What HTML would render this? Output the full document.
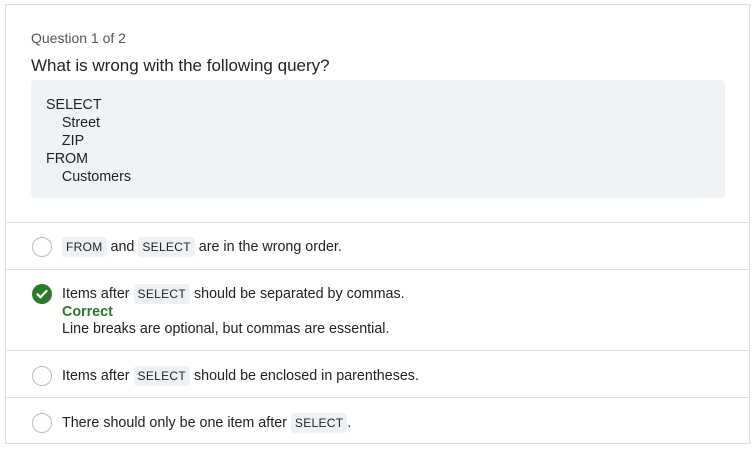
<!DOCTYPE html><html><head><style>
body{margin:0;background:#fff;font-family:"Liberation Sans",sans-serif;color:#222;}
.card{position:absolute;left:5px;top:4px;width:743px;height:438px;border:1px solid #ddd;}
.abs{position:absolute;white-space:nowrap}
.code{position:absolute;left:25px;top:75px;width:694px;height:118px;background:#f0f3f6;border-radius:4px}
.line{position:absolute;left:0;width:743px;border-top:1px solid #ddd}
.circ{position:absolute;left:26px;width:18px;height:18px;border:1px solid #bbb;border-radius:50%;background:#fff}
.k{font-family:"Liberation Sans",sans-serif;font-size:12px;background:#eef1f4;padding:3px 4px;border-radius:3px;letter-spacing:.3px}
.t{font-size:14.3px;left:56px}
</style></head><body><div class="card">
<div class="abs" style="left:25px;top:25px;font-size:14px;color:#555">Question 1 of 2</div>
<div class="abs" style="left:25px;top:51px;font-size:17px;color:#222">What is wrong with the following query?</div>
<div class="code"><div class="abs" style="left:15px;top:16px;font-size:14.3px;line-height:18px;color:#222">SELECT<br>&nbsp;&nbsp;&nbsp;&nbsp;Street<br>&nbsp;&nbsp;&nbsp;&nbsp;ZIP<br>FROM<br>&nbsp;&nbsp;&nbsp;&nbsp;Customers</div></div>
<div class="line" style="top:217px"></div>
<div class="circ" style="top:232px"></div>
<div class="abs t" style="top:234px"><span class="k">FROM</span> and <span class="k">SELECT</span> are in the wrong order.</div>
<div class="line" style="top:264px"></div>
<svg class="abs" style="left:26px;top:279px" width="20" height="20"><circle cx="10" cy="10" r="10" fill="#2a7a2a"/><path d="M5.5 10.3l3 3 6-6.3" stroke="#fff" stroke-width="2.2" fill="none" stroke-linecap="round" stroke-linejoin="round"/></svg>
<div class="abs t" style="top:281px;line-height:17.5px">Items after <span class="k">SELECT</span> should be separated by commas.<br><b style="color:#2a7a2a">Correct</b><br>Line breaks are optional, but commas are essential.</div>
<div class="line" style="top:345px"></div>
<div class="circ" style="top:361px"></div>
<div class="abs t" style="top:363px">Items after <span class="k">SELECT</span> should be enclosed in parentheses.</div>
<div class="line" style="top:392px"></div>
<div class="circ" style="top:408px"></div>
<div class="abs t" style="top:410px">There should only be one item after <span class="k">SELECT</span>.</div>
</div></body></html>
